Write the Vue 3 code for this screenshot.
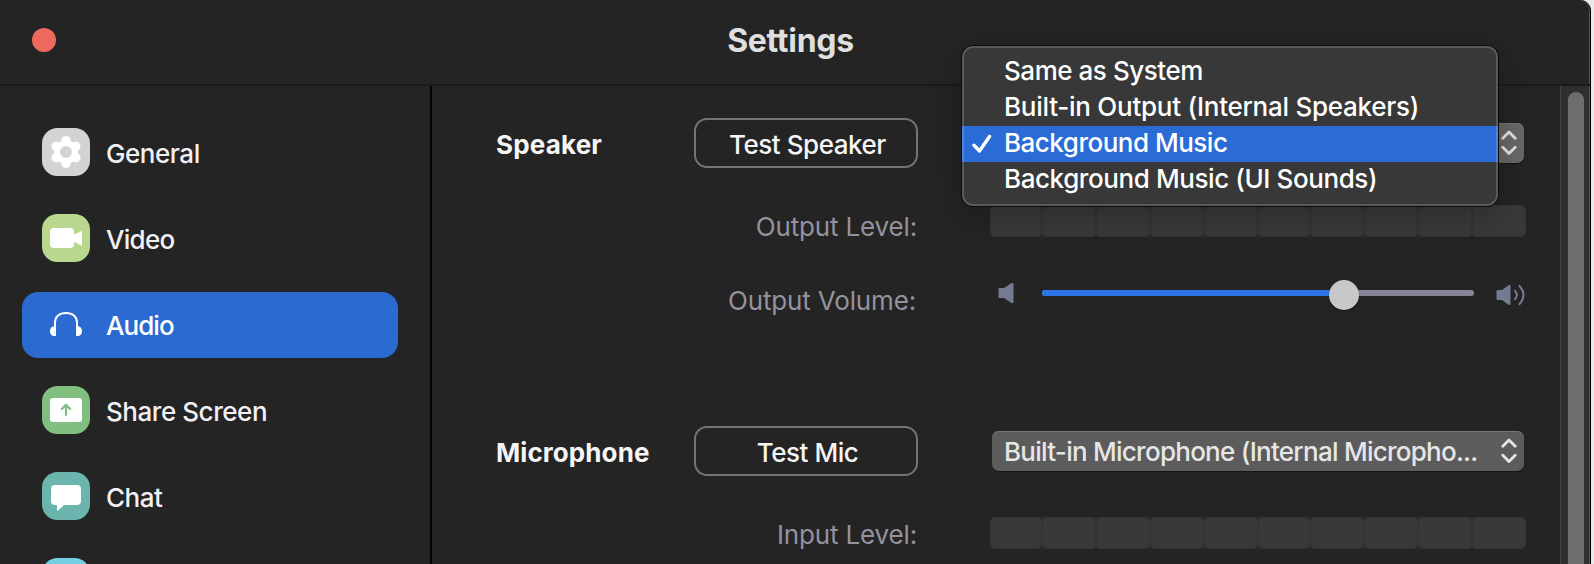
<script setup>
const nav = [
  { id: 'general', label: 'General', color: '#d3d3d3' },
  { id: 'video', label: 'Video', color: '#b9d78f' },
  { id: 'audio', label: 'Audio', color: 'transparent', active: true },
  { id: 'share', label: 'Share Screen', color: '#81bf80' },
  { id: 'chat', label: 'Chat', color: '#6cb5af' },
  { id: 'more', label: '', color: '#74d0e2' },
]
const teeth = [0, 60, 120, 180, 240, 300]
const outputs = [
  { id: 'same', label: 'Same as System' },
  { id: 'builtin', label: 'Built-in Output (Internal Speakers)' },
  { id: 'bgm', label: 'Background Music', selected: true },
  { id: 'bgmui', label: 'Background Music (UI Sounds)' },
]
const cells = [52, 54, 54, 54, 54, 52, 54, 54, 54, 54]
const volume = 70
</script>

<template>
  <div class="desktop">
    <div class="window">
      <header class="titlebar">
        <span class="close"></span>
        <h1 class="title">Settings</h1>
      </header>
      <div class="body">
        <nav class="sidebar">
          <div v-for="n in nav" :key="n.id" class="item" :class="[n.id, { active: n.active }]">
            <svg class="icon" viewBox="0 0 48 48">
              <rect width="48" height="48" rx="15.5" :fill="n.color" />
              <g v-if="n.id === 'general'" fill="#fff">
                <circle cx="24" cy="24" r="11.6" />
                <path v-for="t in teeth" :key="t" :transform="`rotate(${t} 24 24)`" d="M18.2 14.6Q19.3 13.5 19.4 12.2Q20 8 24 8T28.6 12.2Q28.7 13.5 29.8 14.6V20H18.2Z" />
                <circle cx="24" cy="24" r="6" :fill="n.color" />
              </g>
              <g v-else-if="n.id === 'video'" fill="#fff">
                <rect x="8" y="14" width="24" height="20" rx="4" />
                <path d="M32 20.8L39 17.2Q40 16.8 40 17.8V31Q40 32 39 31.5L32 27.8Z" />
              </g>
              <g v-else-if="n.id === 'audio'">
                <path d="M13 30V22.5C13 16.5 17.5 12.9 24 12.9S35 16.5 35 22.5V30" fill="none" stroke="#fff" stroke-width="2" />
                <path d="M14 26.3V36H12C9.3 36 8 33.5 8 31S9.3 26.3 12 26.3ZM34 26.3V36H36C38.7 36 40 33.5 40 31S38.7 26.3 36 26.3Z" fill="#fff" />
              </g>
              <g v-else-if="n.id === 'share'">
                <rect x="8" y="12" width="32" height="24" rx="3" fill="#fff" />
                <path d="M24 29V19.5M19.8 23L24 18.9L28.2 23" fill="none" stroke="#81bf80" stroke-width="2.2" stroke-linecap="round" stroke-linejoin="round" />
              </g>
              <path v-else-if="n.id === 'chat'" d="M13 13H35Q39 13 39 17V29Q39 33 35 33H22L16 38.5Q15 39.3 15 38V33H13Q9 33 9 29V17Q9 13 13 13Z" fill="#fff" />
            </svg>
            <span class="label">{{ n.label }}</span>
          </div>
        </nav>
        <main class="content">
          <section class="group speaker">
            <div class="row main-row">
              <h2 class="heading">Speaker</h2>
              <button class="test">Test Speaker</button>
              <div class="select">
                <span class="value"></span>
                <svg class="arrows" viewBox="0 0 16 26"><path d="M1.8 8.3L8 2L14.2 8.3M1.8 17.2L8 23.5L14.2 17.2" /></svg>
              </div>
            </div>
            <div class="row level-row">
              <span class="caption level">Output Level:</span>
              <div class="meter"><i v-for="(w, i) in cells" :key="i" class="cell" :style="{ width: w + 'px' }"></i></div>
            </div>
            <div class="row volume-row">
              <span class="caption">Output Volume:</span>
              <div class="volume">
                <svg class="quiet" viewBox="0 0 16 20"><path d="M1.5 5H6L13.5 0Q15.5-.5 15.5 1V19Q15.5 20.5 13.5 20L6 15H1.5Q.5 15 .5 14V6Q.5 5 1.5 5Z" /></svg>
                <div class="track"><div class="fill" :style="{ width: volume + '%' }"></div><span class="knob"></span></div>
                <svg class="loud" viewBox="0 0 30 22">
                  <path d="M1.5 6H6L12.5 1.2Q14.5.2 14.5 2V20Q14.5 21.8 12.5 20.8L6 16H1.5Q.5 16 .5 15V7Q.5 6 1.5 6Z" />
                  <path class="wave" d="M19 6.8Q22.8 11 19 15.2M23.5 1.8Q31.5 11 23.5 20.2" />
                </svg>
              </div>
            </div>
          </section>
          <section class="group microphone">
            <div class="row main-row">
              <h2 class="heading mic">Microphone</h2>
              <button class="test">Test Mic</button>
              <div class="select">
                <span class="value">Built-in Microphone (Internal Micropho...</span>
                <svg class="arrows" viewBox="0 0 16 26"><path d="M1.8 8.3L8 2L14.2 8.3M1.8 17.2L8 23.5L14.2 17.2" /></svg>
              </div>
            </div>
            <div class="row level-row">
              <span class="caption level">Input Level:</span>
              <div class="meter"><i v-for="(w, i) in cells" :key="i" class="cell" :style="{ width: w + 'px' }"></i></div>
            </div>
          </section>
        </main>
        <div class="scrollbar"><div class="thumb"></div></div>
      </div>
      <div class="menu">
        <div v-for="o in outputs" :key="o.id" class="option" :class="[o.id, { selected: o.selected }]">
          <svg class="check" viewBox="0 0 20 20"><path v-if="o.selected" d="M2 11.3L7.5 17L17.5 2.5" /></svg>
          <span class="option-label">{{ o.label }}</span>
        </div>
      </div>
    </div>
  </div>
</template>

<style>
body { margin: 0; }
</style>
<style scoped>
.desktop {
  width: 1594px;
  height: 564px;
  overflow: hidden;
  background: #e9e9e9;
  font: 500 26px/32px Inter, "Liberation Sans", sans-serif;
  letter-spacing: -0.45px;
  color: #f1f1f5;
}
.window {
  position: relative;
  box-sizing: border-box;
  width: 1591px;
  height: 600px;
  overflow: hidden;
  border-right: 1px solid #000;
  border-radius: 0 11px 0 0;
  background: #242424;
  box-shadow: inset -1px 0 #555;
}
.titlebar {
  display: grid;
  grid-template-columns: 32px 1fr 56px;
  align-items: center;
  box-sizing: border-box;
  height: 86px;
  padding-bottom: 4px;
  border-bottom: 2px solid #1a1a1a;
}
.close {
  grid-column: 2;
  grid-row: 1;
  width: 24px;
  height: 24px;
  border-radius: 50%;
  background: #ee6a5f;
}
.title {
  grid-column: 1 / -1;
  grid-row: 1;
  margin: 0 9px 0 0;
  padding-top: 2px;
  font-size: 32px;
  line-height: 40px;
  font-weight: 700;
  letter-spacing: -0.3px;
  text-align: center;
  color: #dfdfdf;
}
.body { display: flex; height: 514px; }
.sidebar {
  box-sizing: border-box;
  width: 432px;
  padding: 34px 32px 0 22px;
  border-right: 2px solid #000;
  display: flex;
  flex-direction: column;
  gap: 20px;
}
.item {
  flex: none;
  display: flex;
  align-items: center;
  gap: 16px;
  box-sizing: border-box;
  height: 66px;
  padding: 0 20px 2px;
  border-radius: 16px;
}
.item.active { background: #2b6ad1; color: #fff; }
.icon { width: 48px; height: 48px; flex: none; }
.label { padding-top: 4px; }
.item.video .label { letter-spacing: -0.7px; }
.item.audio .label { letter-spacing: -0.95px; }
.content { flex: 1; padding: 32px 0 0 64px; }
.group { height: 308px; }
.row { display: flex; }
.main-row { align-items: center; height: 50px; }
.heading {
  width: 198px;
  margin: 0;
  font-size: 26px;
  font-weight: 700;
  letter-spacing: 0.18px;
  padding-top: 3px;
  color: #f5f5f5;
}
.heading.mic { letter-spacing: 0.08px; }
.test {
  box-sizing: border-box;
  width: 224px;
  height: 50px;
  padding: 3px 0 0 3px;
  border: 2px solid #747474;
  border-radius: 13px;
  background: none;
  font: inherit;
  letter-spacing: -0.46px;
  color: #f5f5f5;
}
.select {
  display: flex;
  align-items: center;
  justify-content: space-between;
  box-sizing: border-box;
  width: 532px;
  height: 40px;
  margin-left: 74px;
  padding: 0 7px 0 12px;
  border-radius: 7px;
  background: #5c5c5c;
  box-shadow: inset 0 1px #777, 0 1px 1px #151515;
  letter-spacing: -0.74px;
  white-space: nowrap;
  color: #e6e6e6;
}
.value { padding-top: 2px; }
.speaker .select { background: #686868; }
.arrows {
  width: 16px;
  height: 26px;
  fill: none;
  stroke: #e4e4e4;
  stroke-width: 2.8;
  stroke-linecap: round;
  stroke-linejoin: round;
}
.level-row { margin-top: 37px; height: 32px; }
.microphone .level-row { margin-top: 41px; }
.caption {
  box-sizing: border-box;
  width: 422px;
  padding-right: 2px;
  text-align: right;
  font-weight: 400;
  letter-spacing: -0.16px;
  color: #94929e;
}
.caption.level { padding: 6px 1px 0 0; }
.microphone .caption.level { padding-top: 2px; }
.meter {
  display: flex;
  margin-left: 72px;
  border-radius: 5px;
  background: #2d2d2d;
}
.cell {
  box-sizing: border-box;
  border: 1px solid #343434;
  border-radius: 5px;
  background: #393939;
}
.volume-row { margin-top: 48px; height: 32px; }
.volume { display: flex; align-items: flex-start; margin-left: 80px; }
.quiet, .loud { fill: #737b91; }
.quiet { width: 16px; height: 20px; margin-top: -2px; overflow: visible; }
.loud { width: 30px; height: 22px; margin: -1px 0 0 22px; overflow: visible; }
.wave { fill: none; stroke: #737b91; stroke-width: 2; stroke-linecap: round; }
.track {
  position: relative;
  width: 432px;
  height: 6px;
  margin: 5px 0 0 28px;
  border-radius: 3px;
  background: #888696;
}
.fill { height: 6px; border-radius: 3px; background: #2d75e6; }
.knob {
  position: absolute;
  left: 287px;
  top: -10px;
  width: 30px;
  height: 30px;
  border-radius: 50%;
  background: #c8c8c8;
  box-shadow: 0 1px 2px rgba(0, 0, 0, 0.4);
}
.scrollbar {
  box-sizing: border-box;
  width: 30px;
  border-left: 1px solid #444;
  background: #2f2f2f;
  padding: 6px 0 0 7px;
  box-shadow: inset -1px 0 #555;
}
.thumb { width: 16px; height: 600px; border-radius: 8px; background: #6e6e6e; }
.menu {
  position: absolute;
  left: 962px;
  top: 46px;
  box-sizing: border-box;
  width: 536px;
  height: 160px;
  padding: 8px 0;
  border-radius: 11px;
  background: #383838;
  box-shadow: 0 0 0 1px #0a0a0a, 0 8px 34px rgba(0, 0, 0, 0.25);
  color: #fff;
  letter-spacing: -0.41px;
}
.menu::after {
  content: "";
  position: absolute;
  inset: 0;
  border: 2px solid rgba(255, 255, 255, 0.17);
  border-radius: 11px;
}
.option {
  display: flex;
  align-items: center;
  gap: 12px;
  height: 36px;
  padding-left: 10px;
  white-space: nowrap;
}
.option-label { padding-bottom: 2px; }
.option.same { letter-spacing: -0.46px; }
.option.selected { background: #2b6bd5; letter-spacing: -0.5px; }
.option.builtin { letter-spacing: -0.26px; }
.check {
  width: 20px;
  height: 20px;
  fill: none;
  stroke: #fff;
  stroke-width: 3.4;
  stroke-linecap: round;
  stroke-linejoin: round;
}
</style>
